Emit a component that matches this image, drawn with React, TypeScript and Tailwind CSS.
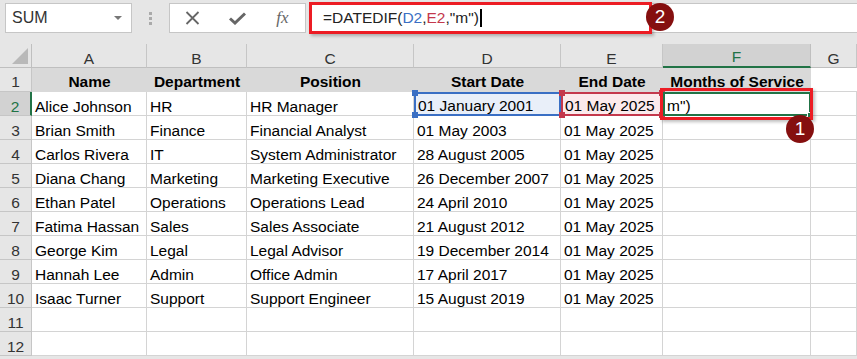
import { Fragment } from 'react';

const rows = [
    ['Alice Johnson', 'HR', 'HR Manager', '01 January 2001', '01 May 2025'],
    ['Brian Smith', 'Finance', 'Financial Analyst', '01 May 2003', '01 May 2025'],
    ['Carlos Rivera', 'IT', 'System Administrator', '28 August 2005', '01 May 2025'],
    ['Diana Chang', 'Marketing', 'Marketing Executive', '26 December 2007', '01 May 2025'],
    ['Ethan Patel', 'Operations', 'Operations Lead', '24 April 2010', '01 May 2025'],
    ['Fatima Hassan', 'Sales', 'Sales Associate', '21 August 2012', '01 May 2025'],
    ['George Kim', 'Legal', 'Legal Advisor', '19 December 2014', '01 May 2025'],
    ['Hannah Lee', 'Admin', 'Office Admin', '17 April 2017', '01 May 2025'],
    ['Isaac Turner', 'Support', 'Support Engineer', '15 August 2019', '01 May 2025'],
];

const headers = ['Name', 'Department', 'Position', 'Start Date', 'End Date', 'Months of Service'];
const letters = ['A', 'B', 'C', 'D', 'E', 'F', 'G'];

const cell = 'border-r border-b border-[#d4d4d4] flex items-end leading-[17px] pl-[3px] whitespace-nowrap overflow-hidden';
const rowHead = 'bg-[#e6e6e6] border-r border-b border-[#c6c6c6] flex items-end leading-[17px] justify-center text-[#333]';

function Corner({ color, pos }: { color: string; pos: string }) {
    return <span className={`absolute w-[6px] h-[6px] ${color} ${pos}`} />;
}

function Badge({ n, className }: { n: string; className: string }) {
    return (
        <div className={`absolute w-[28px] h-[28px] rounded-full bg-[#850f0f] text-white text-[19px] flex items-center justify-center ${className}`}>
            {n}
        </div>
    );
}

export default function App() {
    return (
        <div className="relative w-[857px] h-[359px] overflow-hidden bg-[#e6e6e6] font-['Liberation_Sans',Arial,sans-serif] text-[15.5px] text-black">
            {/* formula bar */}
            <div className="h-[44px] flex items-start pt-[3px]">
                <div className="ml-[5px] w-[127px] h-[30px] bg-white border border-[#c6c6c6] flex items-center justify-between pl-[6px] pr-[9px] text-[#333] text-[16px]">
                    <span>SUM</span>
                    <span className="w-0 h-0 border-l-[4px] border-r-[4px] border-t-[4px] border-l-transparent border-r-transparent border-t-[#777]" />
                </div>
                <div className="w-[37px] h-[30px] flex flex-col items-center justify-center gap-[2px]">
                    <span className="w-[3px] h-[3px] bg-[#aaa]" />
                    <span className="w-[3px] h-[3px] bg-[#aaa]" />
                    <span className="w-[3px] h-[3px] bg-[#aaa]" />
                </div>
                <div className="w-[137px] h-[30px] bg-white border border-[#c6c6c6] flex items-center text-[#666]">
                    <div className="w-[45px] flex justify-center">
                        <svg width="15" height="14" viewBox="0 0 15 14">
                            <path d="M1.5 1 L13.5 13 M13.5 1 L1.5 13" stroke="#666" strokeWidth="1.8" />
                        </svg>
                    </div>
                    <div className="w-[45px] flex justify-center">
                        <svg width="17" height="13" viewBox="0 0 17 13">
                            <path d="M1 6.5 L6 11 L16 1.5" stroke="#666" strokeWidth="3" fill="none" />
                        </svg>
                    </div>
                    <div className="w-[45px] flex justify-center font-['Liberation_Serif',serif] italic text-[17px] text-[#666]">
                        fx
                    </div>
                </div>
                <div className="ml-[3px] flex-1 h-[30px] bg-white border border-[#c6c6c6] border-r-0 flex items-center pl-[13px] text-[15.5px] text-[#222]">
                    <span>=DATEDIF(</span>
                    <span className="text-[#3a6fc4]">D2</span>
                    <span>,</span>
                    <span className="text-[#c4384c]">E2</span>
                    <span>,"m")</span>
                    <span className="ml-[1px] w-[2px] h-[18px] bg-black" />
                </div>
            </div>

            {/* sheet */}
            <div className="grid grid-cols-[32px_115px_100px_167px_147px_102px_148px_46px] auto-rows-[24px]">
                <div className="relative border-r border-b border-[#bfbfbf]">
                    <svg className="absolute right-[3px] bottom-[3px]" width="16" height="16" viewBox="0 0 16 16">
                        <path d="M16 0 L16 16 L0 16 Z" fill="#b9b9b9" />
                    </svg>
                </div>
                {letters.map((l) =>
                    l === 'F' ? (
                        <div key={l} className="bg-[#d2d2d2] border-r border-[#bfbfbf] border-b-2 border-b-[#217346] flex items-end leading-[17px] pb-[1px] justify-center text-[#217346] text-[15.5px]">
                            {l}
                        </div>
                    ) : (
                        <div key={l} className="border-r border-[#c6c6c6] border-b border-b-[#bfbfbf] flex items-end leading-[17px] justify-center text-[#333] text-[15.5px]">
                            {l}
                        </div>
                    )
                )}

                {/* row 1 */}
                <div className={`${rowHead} pb-[1px]`}>1</div>
                {headers.map((h) => (
                    <div key={h} className="bg-[#d9d9d9] flex items-end leading-[17px] pb-[2px] justify-center font-bold whitespace-nowrap">
                        {h}
                    </div>
                ))}
                <div className="bg-white border-b border-[#d4d4d4]" />

                {rows.map((r, i) => {
                    const first = i === 0;
                    return (
                        <Fragment key={i}>
                            {first ? (
                                <div className="bg-[#d2d2d2] border-r-2 border-r-[#217346] border-b border-[#c6c6c6] flex items-end leading-[17px] justify-center text-[#217346]">
                                    2
                                </div>
                            ) : (
                                <div className={rowHead}>{i + 2}</div>
                            )}
                            <div className={`bg-white ${cell}`}>{r[0]}</div>
                            <div className={`bg-white ${cell}`}>{r[1]}</div>
                            <div className={`bg-white ${cell}`}>{r[2]}</div>
                            {first ? (
                                <div className="relative bg-[#e9eff9] border-2 border-[#3a6fc4] flex items-end leading-[17px] pl-[2px] whitespace-nowrap">
                                    {r[3]}
                                    <Corner color="bg-[#3a6fc4]" pos="-left-[4px] -top-[4px]" />
                                    <Corner color="bg-[#3a6fc4]" pos="-left-[4px] -bottom-[4px]" />
                                </div>
                            ) : (
                                <div className={`bg-white ${cell}`}>{r[3]}</div>
                            )}
                            {first ? (
                                <div className="relative bg-[#fbeaec] border-2 border-[#c4384c] flex items-end leading-[17px] pl-[2px] whitespace-nowrap">
                                    {r[4]}
                                    <Corner color="bg-[#c4384c]" pos="-left-[4px] -top-[4px]" />
                                    <Corner color="bg-[#c4384c]" pos="-right-[4px] -top-[4px]" />
                                    <Corner color="bg-[#c4384c]" pos="-left-[4px] -bottom-[4px]" />
                                    <Corner color="bg-[#c4384c]" pos="-right-[4px] -bottom-[4px]" />
                                </div>
                            ) : (
                                <div className={`bg-white ${cell}`}>{r[4]}</div>
                            )}
                            {first ? (
                                <div className="relative bg-white border-2 border-[#217346] flex items-end leading-[17px] pl-[2px]">
                                    m")
                                    <span className="absolute -right-[4px] -bottom-[4px] w-[6px] h-[6px] bg-[#217346] border border-white" />
                                </div>
                            ) : (
                                <div className={`bg-white ${cell}`} />
                            )}
                            <div className={`bg-white ${cell}`} />
                        </Fragment>
                    );
                })}

                {[11, 12].map((n) => (
                    <Fragment key={n}>
                        <div className={rowHead}>{n}</div>
                        {[0, 1, 2, 3, 4, 5, 6].map((c) => (
                            <div key={c} className={`bg-white ${cell}`} />
                        ))}
                    </Fragment>
                ))}
            </div>

            {/* annotations */}
            <div className="absolute left-[309px] top-[2px] w-[343px] h-[32px] border-[3px] border-[#ec1c24] shadow-[2px_2px_3px_rgba(0,0,0,0.25)]" />
            <Badge n="2" className="left-[646px] top-[3px]" />
            <div className="absolute left-[660px] top-[88px] w-[153px] h-[32px] border-[3px] border-[#ec1c24] shadow-[2px_2px_3px_rgba(0,0,0,0.25)]" />
            <Badge n="1" className="left-[786px] top-[115px]" />
        </div>
    );
}
